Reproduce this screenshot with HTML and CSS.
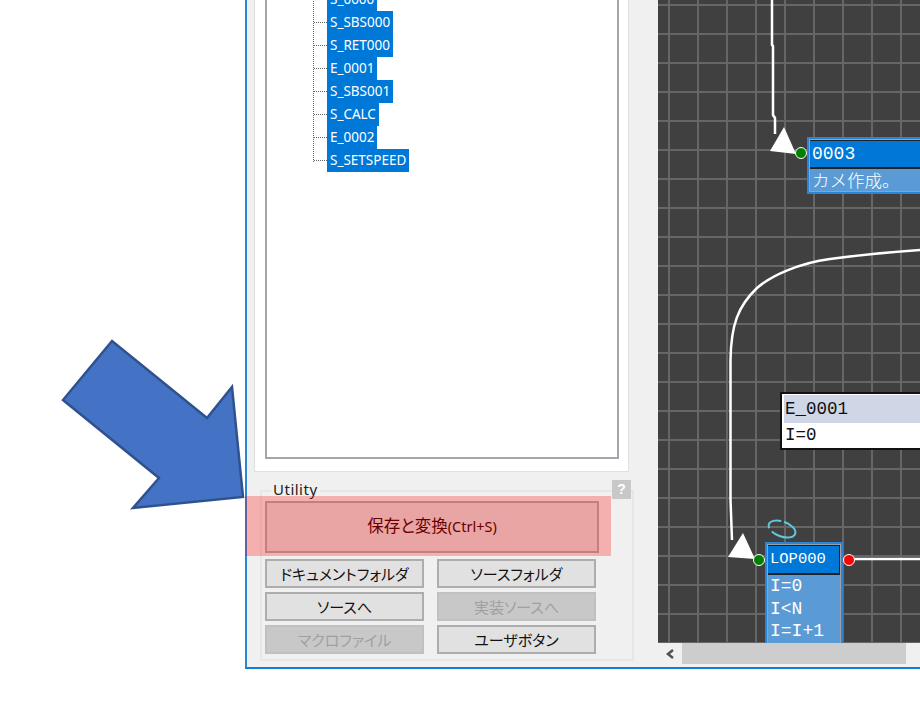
FILE: index.html
```html
<!DOCTYPE HTML>
<html>

<head>
    <title>Utility</title>
    <meta charset="UTF-8" />
    <link rel="stylesheet" href="styles.css">
</head>

<body>
    <div class="window">
        <div class="side">
            <div class="panel">
                <div class="tree">
                    <ul class="tree-list">
                        <li><span>S_0000</span></li>
                        <li><span>S_SBS000</span></li>
                        <li><span>S_RET000</span></li>
                        <li><span>E_0001</span></li>
                        <li><span>S_SBS001</span></li>
                        <li><span>S_CALC</span></li>
                        <li><span>E_0002</span></li>
                        <li><span>S_SETSPEED</span></li>
                    </ul>
                </div>
            </div>
            <div class="utility">
                <span class="utility-title">Utility</span>
                <span class="help">?</span>
                <button class="btn btn-save">保存と変換<small>(Ctrl+S)</small></button>
                <div class="btn-grid">
                    <button class="btn">ドキュメントフォルダ</button>
                    <button class="btn">ソースフォルダ</button>
                    <button class="btn">ソースへ</button>
                    <button class="btn off">実装ソースへ</button>
                    <button class="btn off">マクロファイル</button>
                    <button class="btn">ユーザボタン</button>
                </div>
            </div>
        </div>
        <div class="main">
            <div class="canvas">
                <svg class="wires" width="262" height="643" viewBox="658 0 262 643">
                    <path class="wire" d="M772 0V45L773 46V115L775 118V134" />
                    <path class="wire" d="M732 540L730.500 500V360C731 325 738 306 757 288C772 275 800 263 830 259C860 255 890 252 920 250" />
                    <path class="wire" d="M849 559H920" />
                    <polygon class="head" points="784,127 770,151 796,154" />
                    <polygon class="head" points="743,533 728,557 755,559" />
                    <circle class="dot" cx="801" cy="153" r="5.500" fill="#008000" />
                    <circle class="dot" cx="759" cy="560" r="5.500" fill="#008000" />
                    <circle class="dot" cx="849" cy="560" r="5.500" fill="#ff0000" />
                    <ellipse class="ring" cx="782" cy="529" rx="14" ry="7.500" transform="rotate(20 782 529)" />
                </svg>

                <div class="node node-0003">
                    <div class="node-head">0003</div>
                    <div class="node-body cjk">カメ作成。</div>
                </div>

                <div class="plain node-e0001">
                    <div class="plain-head">E_0001</div>
                    <div class="plain-body">I=0</div>
                </div>

                <div class="node node-lop">
                    <div class="node-head small">LOP000</div>
                    <div class="node-body">I=0<br>I&lt;N<br>I=I+1</div>
                </div>
            </div>
            <div class="scrollbar">
                <svg class="scroll-arrow" width="24" height="22" viewBox="0 0 24 22">
                    <path d="M15 7L10 11L15 15" fill="none" stroke="#505050" stroke-width="2.500" />
                </svg>
                <div class="thumb"></div>
            </div>
        </div>
    </div>

    <div class="highlight"></div>

    <svg class="arrow" width="210" height="190" viewBox="50 330 210 190">
        <polygon points="112,341 63,400 159,478 133,508 243,497 232,387 207,418" />
    </svg>
</body>

</html>
```

FILE: styles.css
```css
html,
body {
    margin: 0;
    height: 100%;
    overflow: hidden;
    background: #ffffff;
}

body {
    font-family: "Noto Sans CJK JP", "Noto Sans", sans-serif;
}

.window {
    /*window, top edge is cut off*/
    box-sizing: border-box;
    display: flex;
    width: 675px;
    height: 669px;
    margin-left: 245px;
    background: #f0f0f0;
    border-left: 2px solid #2a86d6;
    border-bottom: 2px solid #0f7fd8;
}

.side {
    width: 411px;
    flex: none;
}

.panel {
    box-sizing: border-box;
    width: 375px;
    height: 472px;
    margin-left: 7px;
    padding: 0 9px 12px 10px;
    background: #ffffff;
    border: 1px solid #e0e0e0;
    border-top: none;
}

.tree {
    box-sizing: border-box;
    height: 100%;
    overflow: hidden;
    border: 2px solid #a3a7ad;
    border-top: none;
}

.tree-list {
    /*first row is cut by the window top*/
    list-style: none;
    margin: -12px 0 0 46px;
    padding: 0;
    border-left: 1px dotted #666666;
    height: 174px;
    width: 300px;
    font-family: "Noto Sans", sans-serif;
    font-size: 13.500px;
}

.tree-list li {
    display: flex;
    align-items: center;
    height: 23px;
}

.tree-list li::before {
    content: "";
    width: 13px;
    border-top: 1px dotted #666666;
}

.tree-list span {
    display: block;
    height: 23px;
    line-height: 22px;
    padding: 0 3px;
    color: #ffffff;
    background: #0078d7;
}

.utility {
    position: relative;
    box-sizing: border-box;
    width: 374px;
    height: 171px;
    margin: 18px 0 0 13px;
    padding: 9px 3px 0 3px;
    border: 2px solid #e6e6e6;
}

.utility-title {
    position: absolute;
    top: -13px;
    left: 9px;
    padding: 0 2px;
    background: #f0f0f0;
    color: #222222;
    font-family: "Noto Sans", sans-serif;
    font-size: 15px;
    letter-spacing: 0.500px;
    line-height: 20px;
}

.help {
    position: absolute;
    top: -12px;
    left: 350px;
    width: 19px;
    height: 19px;
    background: #c8c8c8;
    color: #ffffff;
    font-family: "Liberation Sans", sans-serif;
    font-size: 14px;
    font-weight: bold;
    line-height: 19px;
    text-align: center;
}

.btn {
    display: block;
    box-sizing: border-box;
    width: 159px;
    height: 29px;
    padding: 0;
    background: #e1e1e1;
    border: 2px solid #adadad;
    color: #111111;
    font-family: "Noto Sans CJK JP", sans-serif;
    font-size: 15px;
    font-feature-settings: "palt";
    line-height: 23px;
}

.btn.off {
    background: #c8c8c8;
    border-color: #c0c0c0;
    color: #a0a0a0;
}

.btn-save {
    width: 334px;
    height: 52px;
    padding-bottom: 2px;
    color: #300000;
    font-size: 16.500px;
}

.btn-save small {
    font-size: 14.500px;
    font-family: "Noto Sans", sans-serif;
}

.btn-grid {
    display: grid;
    grid-template-columns: 159px 159px;
    gap: 4px 13px;
    margin-top: 6px;
}

.main {
    flex: 1;
    min-width: 0;
}

.canvas {
    /*diagram area, grid pitch 29px*/
    position: relative;
    height: 643px;
    overflow: hidden;
    background-color: #404040;
    background-image:
        linear-gradient(90deg, #666666 2px, transparent 2px),
        linear-gradient(#666666 2px, transparent 2px);
    background-size: 29px 29px;
    background-position: 10px 4px;
}

.wires {
    position: absolute;
    top: 0;
    left: 0;
}

.wire {
    fill: none;
    stroke: #ffffff;
    stroke-width: 2.500;
}

.head {
    fill: #ffffff;
}

.dot {
    stroke: #ffffff;
    stroke-width: 1;
}

.ring {
    fill: none;
    stroke: #62c6dc;
    stroke-width: 2;
    stroke-dasharray: 26 4 18 3;
}

.node {
    position: absolute;
    box-sizing: border-box;
    padding: 1px;
    background: #a0a0a0;
    border: 2px solid #2a85d8;
    color: #ffffff;
    font-family: "Liberation Mono", monospace;
    font-size: 18px;
}

.node-head {
    height: 26px;
    padding-left: 2px;
    background: #0078d7;
    border: 1px solid #222222;
    border-width: 1px 1px 2px 0;
    line-height: 26px;
}

.node-head.small {
    height: 27px;
    font-size: 15.500px;
    line-height: 27px;
}

.node-body {
    padding-left: 2px;
    background: #5b9bd5;
    line-height: 22.500px;
}

.node-body.cjk {
    height: 22px;
    font-family: "Noto Sans CJK JP", sans-serif;
    font-size: 17.500px;
    font-weight: 300;
}

.node-0003 {
    top: 137px;
    left: 149px;
    width: 200px;
}

.node-lop {
    top: 542px;
    left: 107px;
    width: 78px;
    height: 120px;
}

.plain {
    position: absolute;
    box-sizing: border-box;
    padding: 1px 2px;
    background: #ffffff;
    border: 2px solid #111111;
    color: #111111;
    font-family: "Liberation Mono", monospace;
    font-size: 17.500px;
}

.plain-head {
    height: 28px;
    padding-left: 1px;
    background: #cfd6e6;
    line-height: 28px;
}

.plain-body {
    height: 25px;
    padding-left: 1px;
    line-height: 25px;
}

.node-e0001 {
    top: 392px;
    left: 122px;
    width: 200px;
    height: 58px;
}

.scrollbar {
    display: flex;
    height: 22px;
}

.scroll-arrow {
    flex: none;
}

.thumb {
    width: 224px;
    height: 21px;
    background: #cdcdcd;
}

.highlight {
    /*red marker drawn over the screenshot*/
    position: absolute;
    top: 496px;
    left: 245px;
    width: 366px;
    height: 60px;
    background: rgba(255, 0, 0, 0.27);
}

.arrow {
    position: absolute;
    top: 330px;
    left: 50px;
}

.arrow polygon {
    fill: #4472c4;
    stroke: #2f528f;
    stroke-width: 2.500;
}
```
